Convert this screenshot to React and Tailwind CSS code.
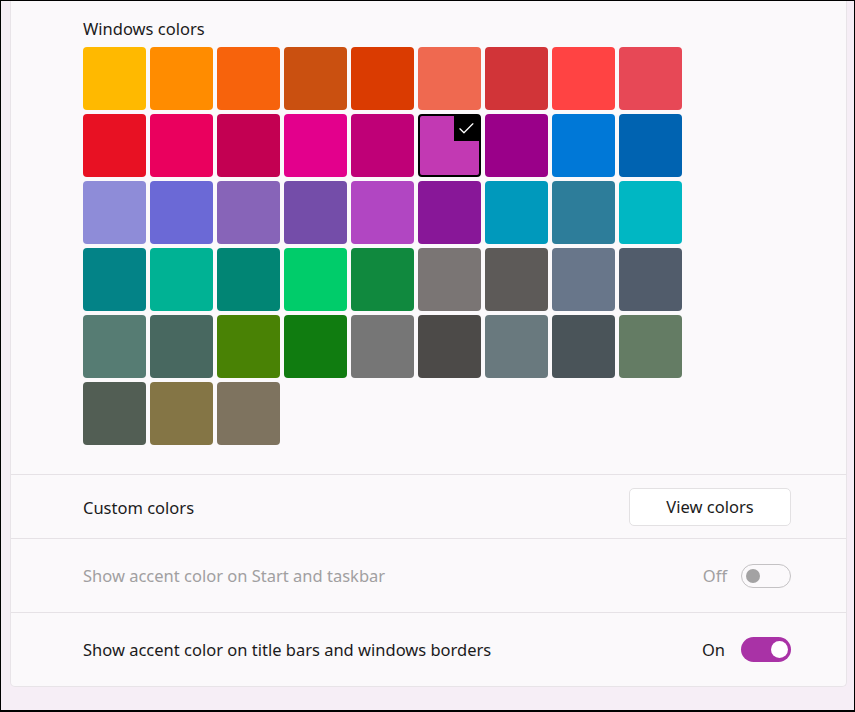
const rows = [
  ['#FFB900', '#FF8C00', '#F7630C', '#CA5010', '#DA3B01', '#EF6950', '#D13438', '#FF4343', '#E74856'],
  ['#E81123', '#EA005E', '#C30052', '#E3008C', '#BF0077', '#C239B3', '#9A0089', '#0078D7', '#0063B1'],
  ['#8E8CD8', '#6B69D6', '#8764B8', '#744DA9', '#B146C2', '#881798', '#0099BC', '#2D7D9A', '#00B7C3'],
  ['#038387', '#00B294', '#018574', '#00CC6A', '#10893E', '#7A7574', '#5D5A58', '#68768A', '#515C6B'],
  ['#567C73', '#486860', '#498205', '#107C10', '#767676', '#4C4A48', '#69797E', '#4A5459', '#647C64'],
  ['#525E54', '#847545', '#7E735F'],
]

const swatches = rows.flat()
const selected = '#C239B3'

function Swatch({ color }) {
  const isSel = color === selected
  return (
    <div
      className={`relative w-[63px] h-[63px] rounded-[4px] ${isSel ? 'border-2 border-black' : ''}`}
      style={{ backgroundColor: color }}
    >
      {isSel && (
        <div className="absolute top-0 right-0 w-[25px] h-[25px] bg-black flex items-center justify-center">
          <svg width="17" height="17" viewBox="0 0 16 16" fill="none">
            <path d="M1.8 8.3 L5.6 12 L14 3.6" stroke="white" strokeWidth="1.2" strokeLinecap="round" strokeLinejoin="round" />
          </svg>
        </div>
      )}
    </div>
  )
}

function Toggle({ on }) {
  if (on) {
    return (
      <div className="w-[50px] h-[25px] rounded-full bg-[#a932a6] flex items-center justify-end pr-[3px]">
        <div className="w-[17px] h-[17px] rounded-full bg-white" />
      </div>
    )
  }
  return (
    <div className="w-[50px] h-[24px] rounded-full border border-[#c4c2c4] flex items-center pl-[4px]">
      <div className="w-[14px] h-[14px] rounded-full bg-[#a3a2a3]" />
    </div>
  )
}

export default function App() {
  return (
    <div
      className="w-[855px] h-[712px] bg-[#f6eef6] border-t border-l border-r border-b-2 border-black pl-[9px] pr-[7px] text-[16.5px] text-[#1b1b1b]"
      style={{ fontFamily: '"Segoe UI", "Noto Sans", sans-serif' }}
    >
      <div className="bg-[#fbf9fb] border-x border-b border-[#e8e4e8] rounded-b-[5px]">
        {/* Windows colors */}
        <div className="pl-[72px] pt-[17px] pb-[29px]">
          <div className="leading-[22px] mb-[7px]">Windows colors</div>
          <div className="grid grid-cols-[repeat(9,63px)] gap-[4px]">
            {swatches.map(c => <Swatch key={c} color={c} />)}
          </div>
        </div>

        <div className="border-t border-[#e6e2e6] h-[64px] flex items-center justify-between pl-[72px] pr-[55px]">
          <span className="pt-[4px]">Custom colors</span>
          <button className="w-[162px] h-[38px] bg-white border border-[#e3e1e3] rounded-[5px] text-[#1b1b1b] pt-[2px]">
            View colors
          </button>
        </div>

        <div className="border-t border-[#e6e2e6] h-[74px] flex items-center justify-between pl-[72px] pr-[55px]">
          <span className="text-[#a19fa1] pt-[2px]">Show accent color on Start and taskbar</span>
          <div className="flex items-center gap-[14px]">
            <span className="text-[#a19fa1] pt-[2px]">Off</span>
            <Toggle on={false} />
          </div>
        </div>

        <div className="border-t border-[#e6e2e6] h-[74px] flex items-center justify-between pl-[72px] pr-[55px]">
          <span className="pt-[2px]">Show accent color on title bars and windows borders</span>
          <div className="flex items-center gap-[16px]">
            <span className="pt-[2px]">On</span>
            <Toggle on />
          </div>
        </div>
      </div>
    </div>
  )
}
